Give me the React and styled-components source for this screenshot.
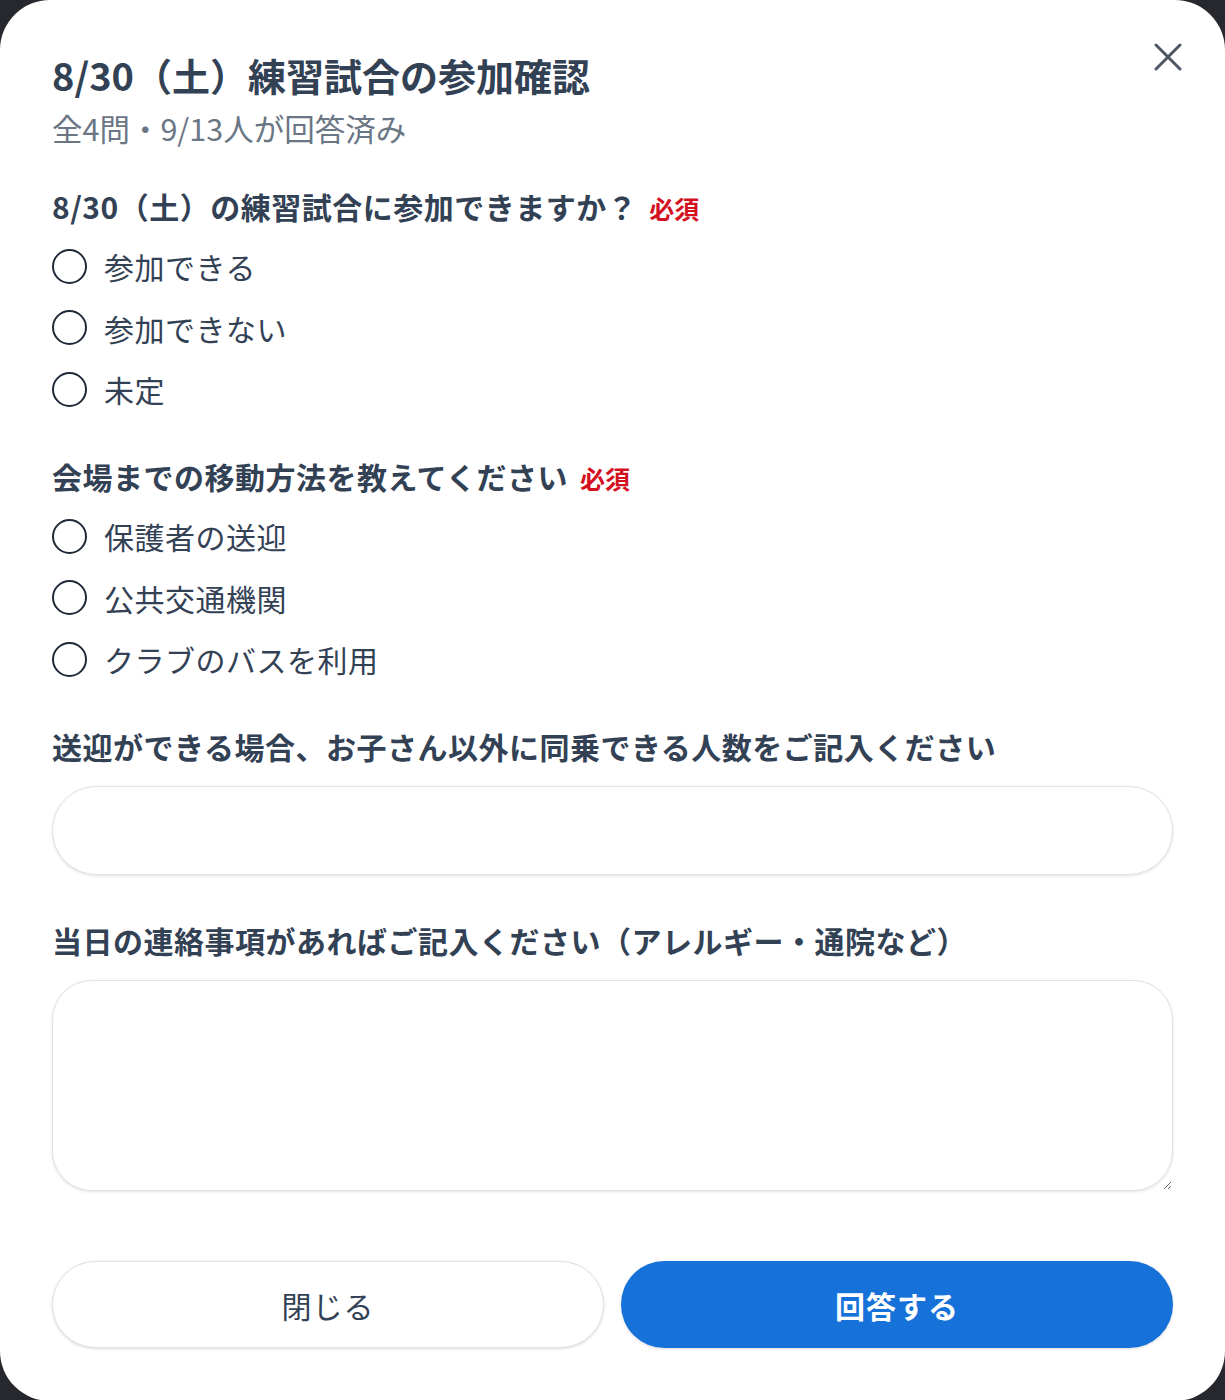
import React from 'react';
import styled, { createGlobalStyle } from 'styled-components';

const GlobalStyle = createGlobalStyle`
  html, body {
    margin: 0;
    padding: 0;
    background: #26282e;
  }
  * {
    box-sizing: border-box;
  }
  body {
    font-family: "Noto Sans CJK JP", "Noto Sans", sans-serif;
    color: #334155;
  }
`;

const Modal = styled.form`
  position: relative;
  width: 1225px;
  min-height: 1400px;
  background: #ffffff;
  border-radius: 50px;
  padding: 51px 52px 53px;
  display: flex;
  flex-direction: column;
`;

const CloseButton = styled.button`
  position: absolute;
  top: 40px;
  right: 40px;
  width: 34px;
  height: 34px;
  padding: 0;
  border: none;
  background: none;
  cursor: pointer;
  display: flex;
  align-items: center;
  justify-content: center;
`;

const Title = styled.h1`
  margin: 0;
  font-size: 38px;
  line-height: 48px;
  font-weight: 700;
  color: #334155;
`;

const Subtitle = styled.p`
  margin: 8px 0 0;
  font-size: 30.5px;
  line-height: 42px;
  color: #6b7685;
`;

const Questions = styled.div`
  display: flex;
  flex-direction: column;
  gap: 44px;
  margin-top: 36px;
`;

// gap between the question label and its answer area
const Question = styled.div`
  display: flex;
  flex-direction: column;
  gap: ${p => p.$gap || 19}px;
`;

const Label = styled.div`
  font-size: 30px;
  line-height: 42px;
  font-weight: 700;
  letter-spacing: 0.5px;
  color: #334155;
`;

const Required = styled.span`
  margin-left: 12px;
  font-size: 25px;
  font-weight: 700;
  color: #d3111f;
  letter-spacing: 0;
`;

const Options = styled.div`
  display: flex;
  flex-direction: column;
  gap: 17.5px;
`;

const Option = styled.label`
  display: flex;
  align-items: center;
  gap: 17px;
  height: 44px;
  font-size: 30px;
  letter-spacing: 0.5px;
  color: #334155;
  cursor: pointer;
`;

const Radio = styled.input.attrs({ type: 'radio' })`
  appearance: none;
  margin: 0;
  width: 35px;
  height: 35px;
  border: 2.5px solid #1f2937;
  border-radius: 50%;
  background: #fff;
  flex-shrink: 0;
`;

const TextInput = styled.input`
  width: 100%;
  height: 89px;
  border: 1px solid #e3e3e3;
  border-radius: 45px;
  box-shadow: 0 1px 3px rgba(0, 0, 0, 0.12);
  padding: 0 36px;
  font: inherit;
  font-size: 30px;
  outline: none;
`;

const TextArea = styled.textarea`
  width: 100%;
  height: 211px;
  border: 1px solid #e3e3e3;
  border-radius: 40px;
  box-shadow: 0 1px 3px rgba(0, 0, 0, 0.12);
  padding: 24px 36px;
  font: inherit;
  font-size: 30px;
  outline: none;
  display: block;
`;

const Footer = styled.div`
  display: grid;
  grid-template-columns: 1fr 1fr;
  gap: 17px;
  margin-top: 70px;
`;

const Button = styled.button`
  height: 87px;
  border-radius: 44px;
  font-family: inherit;
  font-size: 30px;
  letter-spacing: 1px;
  cursor: pointer;
  border: ${p => (p.$primary ? 'none' : '1px solid #e3e3e3')};
  background: ${p => (p.$primary ? '#1672d9' : '#ffffff')};
  color: ${p => (p.$primary ? '#ffffff' : '#334155')};
  font-weight: ${p => (p.$primary ? 700 : 400)};
  box-shadow: 0 1px 3px rgba(0, 0, 0, 0.14);
`;

const CloseIcon = () => (
  <svg width="28" height="28" viewBox="0 0 28 28" fill="none">
    <path
      d="M2 2L26 26M26 2L2 26"
      stroke="#4b5565"
      strokeWidth="3"
      strokeLinecap="round"
    />
  </svg>
);

const questions = [
  {
    name: 'attend',
    label: '8/30（土）の練習試合に参加できますか？',
    required: true,
    options: ['参加できる', '参加できない', '未定'],
  },
  {
    name: 'transport',
    label: '会場までの移動方法を教えてください',
    required: true,
    options: ['保護者の送迎', '公共交通機関', 'クラブのバスを利用'],
  },
];

const App = () => (
  <>
    <GlobalStyle />
    <Modal onSubmit={e => e.preventDefault()}>
      <CloseButton type="button" aria-label="閉じる">
        <CloseIcon />
      </CloseButton>
      <Title>8/30（土）練習試合の参加確認</Title>
      <Subtitle>全4問・9/13人が回答済み</Subtitle>

      <Questions>
        {questions.map(q => (
          <Question key={q.name} $gap={15} role="radiogroup">
            <Label>
              {q.label}
              {q.required && <Required>必須</Required>}
            </Label>
            <Options>
              {q.options.map(opt => (
                <Option key={opt}>
                  <Radio name={q.name} value={opt} />
                  {opt}
                </Option>
              ))}
            </Options>
          </Question>
        ))}

        <Question>
          <Label>送迎ができる場合、お子さん以外に同乗できる人数をご記入ください</Label>
          <TextInput type="text" />
        </Question>

        <Question>
          <Label>当日の連絡事項があればご記入ください（アレルギー・通院など）</Label>
          <TextArea />
        </Question>
      </Questions>

      <Footer>
        <Button type="button">閉じる</Button>
        <Button type="submit" $primary>回答する</Button>
      </Footer>
    </Modal>
  </>
);

export default App;
